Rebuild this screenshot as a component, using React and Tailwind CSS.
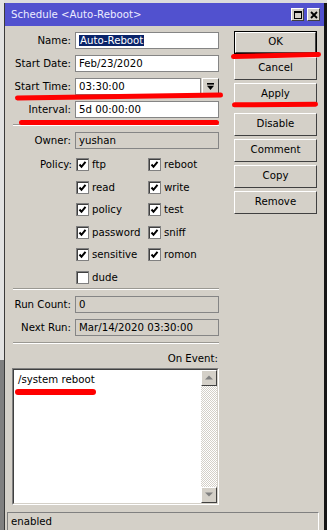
import React from 'react';

// --- HELPERS ---
const Field = ({ children, gray = false, width = 'w-[144px]' }) => (
    <div className={`h-[17px] ${width} border border-[#858585] leading-[15px] pl-[3px] whitespace-nowrap overflow-hidden ${gray ? 'bg-[#d4d0c8]' : 'bg-white'}`}>{children}</div>
);

const Row = ({ label, children, className = '' }) => (
    <div className={`flex items-center h-[17px] ${className}`}>
        <div className="w-[66px] shrink-0 text-right whitespace-nowrap">{label}</div>
        <div className="ml-[4px] flex">{children}</div>
    </div>
);

const Separator = ({ className = '' }) => <div className={`ml-[8px] w-[206px] h-[2px] border-t border-t-[#9a9892] border-b border-b-white ${className}`} />;

const Check = ({ on = true, label }) => (
    <div className="flex items-center h-[13px]">
        <div className="w-[13px] h-[13px] bg-white border border-[#808080] shadow-[inset_1px_1px_0_#404040] flex items-center justify-center">
            {on && (
                <svg width="9" height="9" viewBox="0 0 9 9">
                    <path d="M1.5 4.5 L3.5 6.8 L7.5 1.8" stroke="#000" strokeWidth="2" fill="none" />
                </svg>
            )}
        </div>
        <span className="ml-[3px] leading-[13px]">{label}</span>
    </div>
);

const WinButton = ({ children, primary = false, className = '' }) => (
    <div className={`h-[23px] w-[83px] ${primary ? 'border border-black' : ''} ${className}`}>
        <div className="w-full h-full border border-t-white border-l-white border-b-[#404040] border-r-[#404040] bg-[#d4d0c8] flex items-center justify-center leading-none">
            {children}
        </div>
    </div>
);

const TitleBtn = ({ children }) => (
    <div className="w-[13px] h-[13px] bg-[#d4d0c8] border border-t-white border-l-white border-b-[#404040] border-r-[#404040] flex items-center justify-center">{children}</div>
);

const ScrollArrow = ({ up }) => (
    <div className="w-[16px] h-[16px] bg-[#d4d0c8] border border-t-white border-l-white border-b-[#404040] border-r-[#404040] flex items-center justify-center">
        <svg width="8" height="5" viewBox="0 0 8 5">
            {up ? <polygon points="0,4.5 8,4.5 4,0.5" fill="#808080" /> : <polygon points="0,0.5 8,0.5 4,4.5" fill="#808080" />}
        </svg>
    </div>
);

const Mark = ({ className }) => <div className={`absolute bg-[#ff0000] rounded-full ${className}`} />;

// --- MAIN ---
export default function App() {
    return (
        <div className="relative w-[327px] h-[530px] overflow-hidden flex font-['DejaVu_Sans',sans-serif] text-[10.2px] text-black bg-[#dcdcdc]">
            {/* desktop strip to the left */}
            <div className="w-[4px] flex flex-col">
                <div className="h-[360px] bg-[#e2e2e2]" />
                <div className="flex-1 bg-[#7f7f7f]" />
            </div>

            {/* window */}
            <div className="flex-1 flex flex-col pt-[3px] bg-[#dcdcdc]">
                <div className="flex-1 flex flex-col border-l border-l-[#3a3a3a] border-r-[3px] border-r-[#161616]">
                    <div className="h-[23px] bg-[#5151cf] flex items-center pl-[6px] pr-[4px] text-[#ececff]">
                        <span className="flex-1">Schedule &lt;Auto-Reboot&gt;</span>
                        <div className="flex gap-[3px]">
                            <TitleBtn><div className="w-[8px] h-[8px] border border-black border-t-2" /></TitleBtn>
                            <TitleBtn>
                                <svg width="8" height="8" viewBox="0 0 8 8"><path d="M1 1 L7 7 M7 1 L1 7" stroke="#000" strokeWidth="1.8" /></svg>
                            </TitleBtn>
                        </div>
                    </div>

                    <div className="flex-1 flex flex-col bg-[#d4d0c8]">
                        <div className="flex">
                            {/* left column */}
                            <div className="w-[220px] pt-[6px] flex flex-col">
                                <Row label="Name:">
                                    <Field><span className="bg-[#0a246a] text-white px-[1px]">Auto-Reboot</span></Field>
                                </Row>
                                <Row label="Start Date:" className="mt-[6px]"><Field>Feb/23/2020</Field></Row>
                                <Row label="Start Time:" className="mt-[6px]">
                                    <Field width="w-[126px]">03:30:00</Field>
                                    <div className="ml-[1px] w-[17px] h-[17px] bg-[#d4d0c8] border border-t-white border-l-white border-b-[#404040] border-r-[#404040] flex items-center justify-center">
                                        <svg width="9" height="9" viewBox="0 0 9 9">
                                            <rect x="1" y="1" width="7" height="1.6" fill="#000" />
                                            <polygon points="1,3.8 8,3.8 4.5,8" fill="#000" />
                                        </svg>
                                    </div>
                                </Row>
                                <Row label="Interval:" className="mt-[6px]"><Field>5d 00:00:00</Field></Row>

                                <Separator className="mt-[6px]" />

                                <Row label="Owner:" className="mt-[6px]"><Field gray>yushan</Field></Row>

                                <div className="flex mt-[9px]">
                                    <div className="w-[67px] shrink-0 text-right h-[13px] leading-[13px]">Policy:</div>
                                    <div className="ml-[4px] grid grid-cols-[72px_70px] gap-y-[9.6px]">
                                        <Check label="ftp" />
                                        <Check label="reboot" />
                                        <Check label="read" />
                                        <Check label="write" />
                                        <Check label="policy" />
                                        <Check label="test" />
                                        <Check label="password" />
                                        <Check label="sniff" />
                                        <Check label="sensitive" />
                                        <Check label="romon" />
                                        <Check label="dude" on={false} />
                                    </div>
                                </div>

                                <Separator className="mt-[4px]" />

                                <Row label="Run Count:" className="mt-[6px]"><Field gray>0</Field></Row>
                                <Row label="Next Run:" className="mt-[6px]"><Field gray>Mar/14/2020 03:30:00</Field></Row>

                                <Separator className="mt-[6px]" />

                                <div className="mt-[8px] h-[13px] leading-[13px] w-[213px] text-right">On Event:</div>

                                <div className="mt-[3px] ml-[7px] w-[207px] h-[137px] flex border border-t-[#808080] border-l-[#808080] border-b-white border-r-white">
                                    <div className="flex-1 flex border border-t-[#404040] border-l-[#404040] border-b-[#d4d0c8] border-r-[#d4d0c8] bg-white">
                                        <div className="flex-1 pl-[4px] pt-[3px] leading-[13px]">/system reboot</div>
                                        <div className="w-[16px] flex flex-col bg-[repeating-conic-gradient(#d4d0c8_0_25%,#ffffff_0_50%)] bg-[length:2px_2px]">
                                            <ScrollArrow up />
                                            <div className="flex-1" />
                                            <ScrollArrow />
                                        </div>
                                    </div>
                                </div>
                            </div>

                            {/* right column */}
                            <div className="ml-[9px] pt-[5px] flex flex-col">
                                <WinButton primary>OK</WinButton>
                                <WinButton className="mt-[3px]">Cancel</WinButton>
                                <WinButton className="mt-[3px]">Apply</WinButton>
                                <WinButton className="mt-[7px]">Disable</WinButton>
                                <WinButton className="mt-[3px]">Comment</WinButton>
                                <WinButton className="mt-[3px]">Copy</WinButton>
                                <WinButton className="mt-[3px]">Remove</WinButton>
                            </div>
                        </div>

                        <div className="mt-auto ml-[2px] w-[312px] h-[18px] border-t border-l border-t-[#808080] border-l-[#808080] border-r border-r-white pl-[3px] leading-[17px]">enabled</div>
                    </div>
                </div>
            </div>

            {/* red hand-drawn annotations */}
            <Mark className="left-[231px] top-[53px] w-[90px] h-[5px] -rotate-[1.5deg]" />
            <Mark className="left-[232px] top-[102px] w-[86px] h-[5px] -rotate-[0.5deg]" />
            <Mark className="left-[15px] top-[94px] w-[208px] h-[5px] -rotate-[0.8deg]" />
            <Mark className="left-[19px] top-[120px] w-[200px] h-[5px]" />
            <Mark className="left-[15px] top-[389px] w-[81px] h-[6px]" />
        </div>
    );
}
